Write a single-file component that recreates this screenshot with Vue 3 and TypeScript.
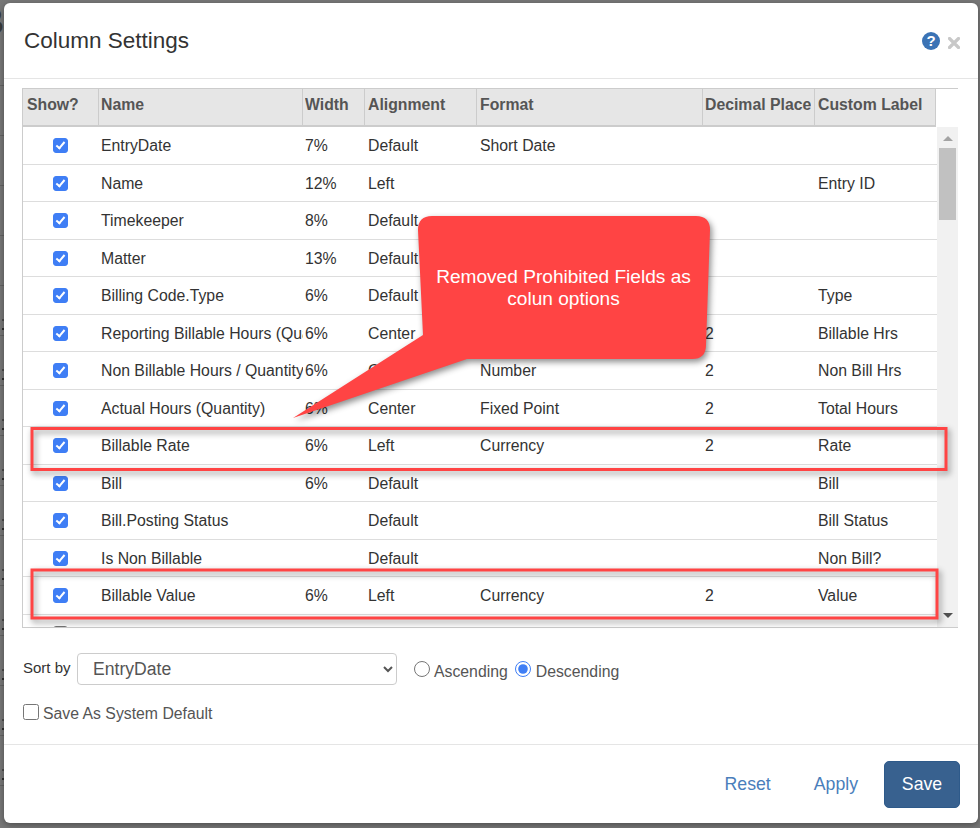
<script setup lang="ts">
interface Row {
  name: string;
  width: string;
  align: string;
  format: string;
  decimals: string;
  label: string;
}

const headers = ['Show?', 'Name', 'Width', 'Alignment', 'Format', 'Decimal Places', 'Custom Label'];

const rows: Row[] = [
  { name: 'EntryDate', width: '7%', align: 'Default', format: 'Short Date', decimals: '', label: '' },
  { name: 'Name', width: '12%', align: 'Left', format: '', decimals: '', label: 'Entry ID' },
  { name: 'Timekeeper', width: '8%', align: 'Default', format: '', decimals: '', label: '' },
  { name: 'Matter', width: '13%', align: 'Default', format: '', decimals: '', label: '' },
  { name: 'Billing Code.Type', width: '6%', align: 'Default', format: '', decimals: '', label: 'Type' },
  { name: 'Reporting Billable Hours (Quantity)', width: '6%', align: 'Center', format: 'Number', decimals: '2', label: 'Billable Hrs' },
  { name: 'Non Billable Hours / Quantity', width: '6%', align: 'Center', format: 'Number', decimals: '2', label: 'Non Bill Hrs' },
  { name: 'Actual Hours (Quantity)', width: '6%', align: 'Center', format: 'Fixed Point', decimals: '2', label: 'Total Hours' },
  { name: 'Billable Rate', width: '6%', align: 'Left', format: 'Currency', decimals: '2', label: 'Rate' },
  { name: 'Bill', width: '6%', align: 'Default', format: '', decimals: '', label: 'Bill' },
  { name: 'Bill.Posting Status', width: '', align: 'Default', format: '', decimals: '', label: 'Bill Status' },
  { name: 'Is Non Billable', width: '', align: 'Default', format: '', decimals: '', label: 'Non Bill?' },
  { name: 'Billable Value', width: '6%', align: 'Left', format: 'Currency', decimals: '2', label: 'Value' },
  { name: '', width: '', align: '', format: '', decimals: '', label: '' },
];

// page rows showing behind the dialog's left edge
const behindRows = Array.from({ length: 15 }, (_, i) => i);
</script>

<template>
  <div class="backdrop">
    <span class="behind-letter" aria-hidden="true">B</span>
    <div class="behind-rows">
      <div v-for="i in behindRows" :key="i" class="behind-row">
        <span v-if="i > 4" class="behind-tick"></span>
        <span v-if="i > 4" class="behind-tick"></span>
      </div>
    </div>

    <div class="modal">
      <header class="modal-head">
        <h1 class="title">Column Settings</h1>
        <div class="head-icons">
          <span class="help">?</span>
          <svg class="close" viewBox="0 0 12 12" width="12" height="12">
            <path d="M1.5 1.5 10.5 10.5M10.5 1.5 1.5 10.5" fill="none" stroke="#c8c8c8" stroke-width="3.2" stroke-linecap="round" />
          </svg>
        </div>
      </header>

      <div class="modal-body">
        <div class="grid-box">
          <div class="grid-head">
            <div v-for="h in headers" :key="h" class="head-cell"><span class="head-text">{{ h }}</span></div>
          </div>
          <div class="grid-scroll">
            <div class="grid-rows">
              <div v-for="r in rows" :key="r.name" class="row">
                <div class="cell-check"><input type="checkbox" class="check" :checked="r.name !== ''" /></div>
                <div class="cell cell-name">{{ r.name }}</div>
                <div class="cell cell-tight">{{ r.width }}</div>
                <div class="cell">{{ r.align }}</div>
                <div class="cell">{{ r.format }}</div>
                <div class="cell cell-tight">{{ r.decimals }}</div>
                <div class="cell">{{ r.label }}</div>
              </div>
            </div>
            <div class="scrollbar">
              <span class="arrow-up"></span>
              <span class="thumb"></span>
              <span class="track-rest"></span>
              <span class="arrow-down"></span>
            </div>
          </div>
        </div>

        <div class="sort-row">
          <label class="sort-label">Sort by</label>
          <select class="sort-select">
            <option>EntryDate</option>
          </select>
          <label class="radio-label"><input type="radio" name="dir" class="radio" />Ascending</label>
          <label class="radio-label"><input type="radio" name="dir" class="radio" checked />Descending</label>
        </div>

        <label class="default-row"><input type="checkbox" class="default-check" />Save As System Default</label>
      </div>

      <footer class="modal-foot">
        <button class="link-btn">Reset</button>
        <button class="link-btn">Apply</button>
        <button class="save-btn">Save</button>
      </footer>
    </div>

    <svg class="notes" viewBox="0 0 980 828" width="980" height="828">
      <g class="note-shadow">
        <path
          d="M432 216H696Q710 216 710 230L706 345Q706 359 692 359H467L293 418L423 335L418 230Q418 216 432 216Z"
          fill="#ff4444"
        />
      </g>
      <text class="note-text" x="563.5" y="283">Removed Prohibited Fields as</text>
      <text class="note-text" x="563.5" y="305">colun options</text>
      <rect class="note-shadow" x="32" y="428.5" width="914" height="41" fill="none" stroke="#ff4444" stroke-width="3" />
      <rect class="note-shadow" x="32" y="570" width="905" height="48" fill="none" stroke="#ff4444" stroke-width="3" />
    </svg>
  </div>
</template>

<style scoped>
.backdrop {
  position: relative;
  box-sizing: border-box;
  width: 980px;
  height: 828px;
  padding: 3px 2px 5px 4px;
  overflow: hidden;
  background: #777;
  font-family: "Liberation Sans", Arial, sans-serif;
  font-size: 15.8px;
  color: #333;
}

.behind-letter {
  position: absolute;
  top: 2px;
  left: -22px;
  font-size: 36px;
  font-weight: 700;
  line-height: 40px;
  color: #3a3a3a;
}

.behind-rows {
  position: absolute;
  top: 36px;
  left: 0;
  width: 4px;
}

.behind-row {
  position: relative;
  height: 50px;
  box-sizing: border-box;
  border-bottom: 1px solid #636363;
}

.behind-tick {
  position: absolute;
  top: 33px;
  right: 0;
  width: 2px;
  height: 2px;
  background: #4c4c4c;
}

.behind-tick + .behind-tick {
  top: 42px;
  background: #2c2c2c;
}

.modal {
  position: relative;
  display: flex;
  flex-direction: column;
  height: 820px;
  background: #fff;
  border-radius: 6px;
  box-shadow: 0 2px 6px rgba(0, 0, 0, 0.35);
}

.modal-head {
  display: flex;
  align-items: center;
  justify-content: space-between;
  height: 76px;
  padding: 0 18px 0 20px;
  border-bottom: 1px solid #e5e5e5;
  box-sizing: border-box;
}

.title {
  margin: 0;
  font-size: 22.5px;
  font-weight: 400;
  color: #333;
}

.head-icons {
  display: flex;
  align-items: center;
  gap: 8px;
}

.help {
  display: flex;
  align-items: center;
  justify-content: center;
  width: 18px;
  height: 18px;
  border-radius: 50%;
  background: #3b73b5;
  color: #fff;
  font-size: 15px;
  font-weight: 700;
}

.close {
  margin-top: 4px;
}

.modal-body {
  flex: 1;
  padding: 9px 20px 0 18px;
}

.grid-box {
  box-sizing: border-box;
  width: 936px;
  height: 540px;
  border-top: 1px solid #ccc;
  border-left: 1px solid #ccc;
  border-bottom: 1px solid #ccc;
  display: flex;
  flex-direction: column;
}

.grid-head {
  display: grid;
  grid-template-columns: 76px 204px 62px 112px 226px 112px 121px;
  width: 913px;
  height: 38px;
  flex: none;
  box-sizing: border-box;
  background: #e6e6e6;
  border-bottom: 2px solid #ccc;
}

.head-cell {
  min-width: 0;
  padding: 7px 3px 0 3px;
  font-weight: 700;
  color: #555;
  border-right: 1px solid #ccc;
}

.head-text {
  display: block;
  overflow: hidden;
  white-space: nowrap;
}

.head-cell:first-child {
  padding-left: 4px;
}

.head-cell:nth-child(2),
.head-cell:nth-child(3),
.head-cell:nth-child(6) {
  padding-left: 2px;
}

.grid-scroll {
  flex: 1;
  display: flex;
  min-height: 0;
}

.grid-rows {
  flex: 1;
  overflow: hidden;
}

.row {
  display: grid;
  grid-template-columns: 76px 204px 62px 112px 226px 112px 122px;
  height: 37.5px;
  box-sizing: border-box;
  border-bottom: 1px solid #ddd;
}

.cell-check {
  display: flex;
  align-items: center;
  justify-content: center;
  padding: 1px 2px 0 0;
}

.check {
  position: relative;
  appearance: none;
  width: 15px;
  height: 15px;
  margin: 0;
  box-sizing: border-box;
  border: 1px solid #767676;
  border-radius: 3px;
  background: #fff;
}

.check:checked {
  border-color: #3f7ef5;
  background: #3f7ef5;
}

.check:checked::after {
  content: "";
  position: absolute;
  top: 1px;
  left: 4px;
  box-sizing: border-box;
  width: 5px;
  height: 9px;
  border-right: 2.5px solid #fff;
  border-bottom: 2.5px solid #fff;
  transform: rotate(40deg);
}

.cell {
  display: flex;
  align-items: center;
  padding-left: 3px;
  padding-top: 2px;
  white-space: nowrap;
  overflow: hidden;
}

.cell-name,
.cell-tight {
  padding-left: 2px;
}

.scrollbar {
  flex: none;
  width: 21px;
  display: flex;
  flex-direction: column;
  align-items: center;
  background: #f1f1f1;
}

.arrow-up,
.arrow-down {
  flex: none;
  width: 0;
  height: 0;
  border-left: 5px solid transparent;
  border-right: 5px solid transparent;
}

.arrow-up {
  margin: 9px 0 7px;
  border-bottom: 5px solid #a3a3a3;
}

.arrow-down {
  margin: 0 0 9px;
  border-top: 5px solid #505050;
}

.thumb {
  flex: none;
  width: 17px;
  height: 72px;
  background: #c1c1c1;
}

.track-rest {
  flex: 1;
}

.sort-row {
  display: flex;
  align-items: center;
  height: 32px;
  margin-top: 25px;
  padding-left: 1px;
}

.sort-label {
  width: 48px;
  margin: -4px 6px 0 0;
  font-size: 15px;
  white-space: nowrap;
}

.sort-select {
  box-sizing: border-box;
  width: 320px;
  height: 32px;
  padding: 0 11px;
  border: 1px solid #ccc;
  border-radius: 4px;
  background: #fff;
  font-family: inherit;
  font-size: 17.6px;
  color: #555;
}

.radio-label {
  display: flex;
  align-items: center;
  margin: 6px 0 0 17px;
  color: #555;
}

.radio-label + .radio-label {
  margin-left: 7px;
}

.radio {
  width: 16px;
  height: 16px;
  margin: -6px 4px 0 0;
  accent-color: #3f7ef5;
}

.radio-label + .radio-label .radio {
  margin-right: 5px;
}

.default-row {
  display: flex;
  align-items: center;
  margin-top: 20px;
  padding-left: 1px;
  color: #555;
}

.default-check {
  width: 16px;
  height: 16px;
  margin: -4px 4px 0 0;
}

.modal-foot {
  display: flex;
  align-items: center;
  justify-content: flex-end;
  gap: 43px;
  height: 79px;
  padding: 0 18px 0 0;
  border-top: 1px solid #e5e5e5;
  box-sizing: border-box;
}

.link-btn {
  padding: 0;
  border: 0;
  background: none;
  font-family: inherit;
  font-size: 17.7px;
  color: #4a7ebb;
}

.save-btn {
  width: 76px;
  height: 47px;
  margin-left: -17px;
  border: 1px solid #2e5a8a;
  border-radius: 5px;
  background: #38618f;
  font-family: inherit;
  font-size: 17.7px;
  color: #fff;
}

.notes {
  position: absolute;
  top: 0;
  left: 0;
  pointer-events: none;
}

.note-shadow {
  filter: drop-shadow(2px 3px 3px rgba(0, 0, 0, 0.45));
}

.note-text {
  fill: #fff;
  font-size: 19.1px;
  text-anchor: middle;
}
</style>
